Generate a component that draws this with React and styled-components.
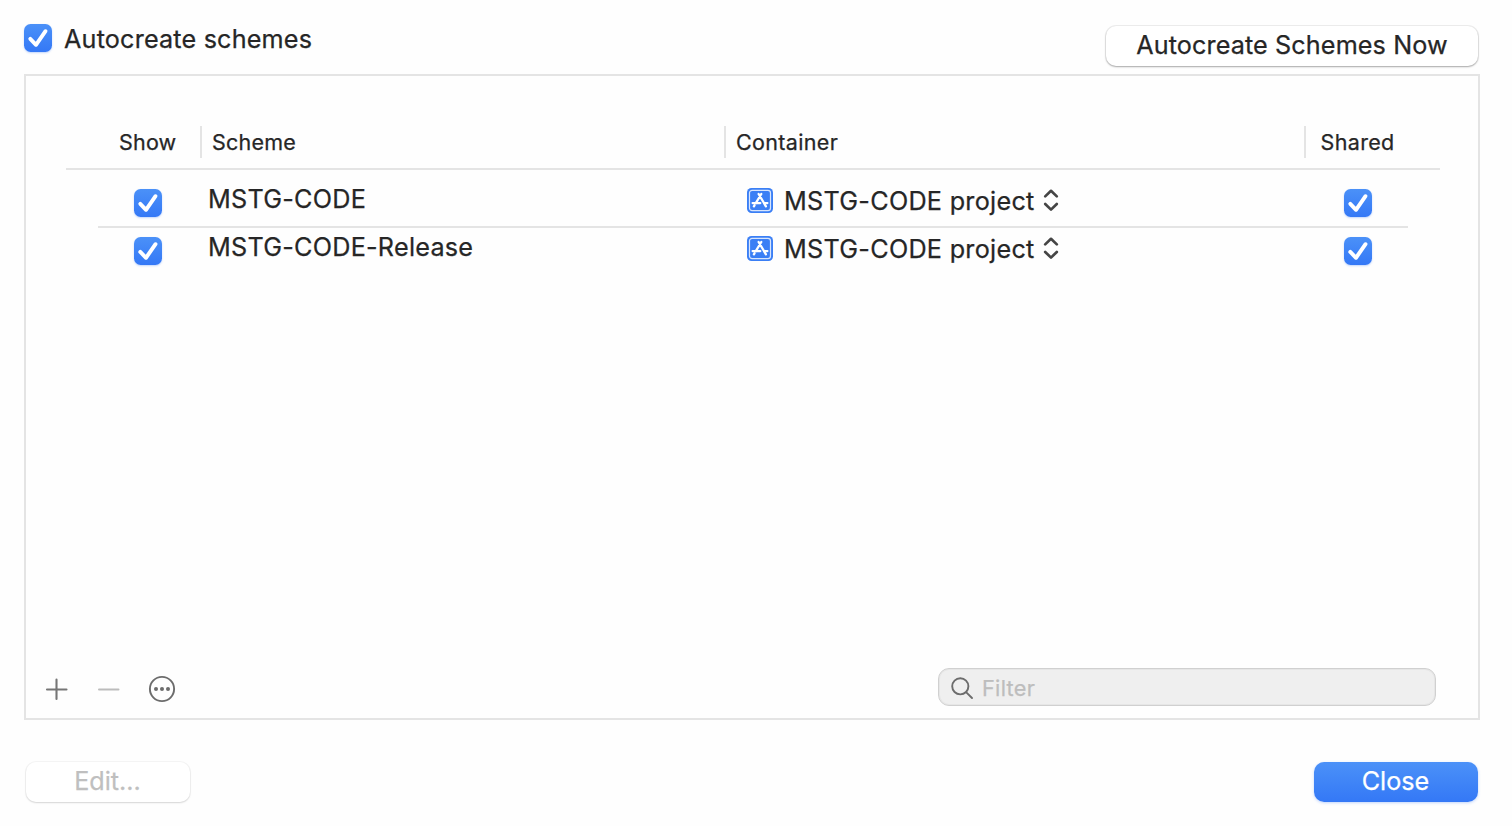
import React from "react";
import styled, { createGlobalStyle } from "styled-components";

const GlobalStyle = createGlobalStyle`
  * { box-sizing: border-box; }
  body {
    margin: 0;
    background: #fefefe;
    color: #262626;
    font-family: Inter, "Liberation Sans", sans-serif;
    font-size: 25.2px;
    line-height: 30px;
    -webkit-font-smoothing: antialiased;
  }
`;

const Sheet = styled.main`
  width: 1512px;
  height: 826px;
  padding: 24px 32px 0 24px;
  display: flex;
  flex-direction: column;
  background: #fefefe;
`;

const TopBar = styled.header`
  height: 50px;
  padding-right: 2px;
  width: 1456px;
  display: flex;
  justify-content: space-between;
  align-items: flex-start;
`;

const CheckLabel = styled.label`
  display: flex;
  gap: 12px;
`;

const Text = styled.span`
  white-space: nowrap;
  letter-spacing: ${(p) => p.$track || 0}px;
  -webkit-text-stroke: 0.25px currentColor;
`;

const CheckBox = styled.span`
  display: block;
  width: 28px;
  height: 28px;
  flex: none;
  border-radius: 6.5px;
  background: linear-gradient(#4b91f8, #3478f6);
  box-shadow: 0 1px 2px rgba(52, 120, 246, 0.3);

  svg { display: block; }
`;

const Button = styled.button`
  width: ${(p) => p.$width}px;
  height: 40px;
  padding: 0 ${(p) => (p.$width < 200 ? 1 : 0)}px 2px 0;
  border: 0;
  border-radius: 10px;
  font: inherit;
  line-height: 38px;
  color: ${(p) => (p.$kind === "primary" ? "#fff" : p.disabled ? "#bfbfbf" : "#262626")};
  background: ${(p) => (p.$kind === "primary" ? "linear-gradient(#4b91f8, #3478f6)" : "#fff")};
  box-shadow: ${(p) =>
    p.$kind === "primary"
      ? "0 1px 3px rgba(52, 120, 246, 0.3)"
      : p.disabled
      ? "0 0 0 1px rgba(0, 0, 0, 0.035), 0 1px 2px rgba(0, 0, 0, 0.13)"
      : "0 0 0 1px rgba(0, 0, 0, 0.06), 0 1px 2px rgba(0, 0, 0, 0.3)"};
`;

const TopButton = styled(Button)`
  margin-top: 2px;
`;

const Frame = styled.section`
  width: 1456px;
  height: 646px;
  border: 2px solid #e4e4e4;
  padding: 50px 38px 0 40px;
  display: flex;
  flex-direction: column;
`;

const HeaderRow = styled.div`
  height: 44px;
  border-bottom: 2px solid #e4e4e4;
  display: grid;
  grid-template-columns: 134px 524px 580px 136px;
  font-size: 21.5px;
`;

const HeaderCell = styled.div`
  height: 32px;
  padding-left: ${(p) => p.$pad}px;
  border-left: ${(p) => (p.$first ? "0" : "2px solid #e4e4e4")};
  line-height: 32px;
`;

const Rows = styled.div`
  padding: 10px 32px 0;
  flex: 1;
`;

const Row = styled.div`
  height: 48px;
  border-bottom: 2px solid ${(p) => (p.$last ? "transparent" : "#e4e4e4")};
  display: grid;
  grid-template-columns: 110px 539px 597px 64px;
  align-items: start;
`;

const CheckCell = styled.div`
  padding: 9px 0 0 ${(p) => p.$pad || 0}px;
`;

const NameCell = styled.div`
  padding-top: 4px;
`;

const ContainerCell = styled.div`
  padding-top: 6px;
  display: flex;
`;

const ProjectGlyph = styled.svg`
  margin: 2px 11px 0 0;
  flex: none;
`;

const Stepper = styled.svg`
  margin: 2px 0 0 8.5px;
  flex: none;
`;

const Footer = styled.div`
  height: 50px;
  margin: 0 4px 0 -40px;
  padding-left: 18px;
  display: flex;
  align-items: flex-start;
  justify-content: space-between;
`;

const Tools = styled.div`
  display: flex;
  padding-top: 6px;
`;

const FilterField = styled.div`
  width: 498px;
  height: 38px;
  border: 1px solid #d0d0d0;
  border-radius: 11px;
  background: #efefef;
  box-shadow: inset 0 0 0 1px #e6e6e6;
  display: flex;
  padding-left: 11px;
  font-size: 21.7px;
  line-height: 38px;
  color: #bdbdbd;

  svg { margin: 7px 8px 0 0; }
`;

const BottomBar = styled.footer`
  width: 1456px;
  padding: 42px 2px 0;
  display: flex;
  justify-content: space-between;
`;

function Check() {
  return (
    <CheckBox role="checkbox" aria-checked="true">
      <svg width="28" height="28" viewBox="0 0 28 28" fill="none">
        <path d="M6.3 14.9L12 20.8L21.5 7.2" stroke="#fff" strokeWidth="3.9" strokeLinecap="round" strokeLinejoin="round" />
      </svg>
    </CheckBox>
  );
}

function ProjectIcon() {
  return (
    <ProjectGlyph width="26" height="25" viewBox="0 0 26 25" fill="none">
      <rect width="26" height="25" rx="4.5" fill="#3b7ff5" />
      <rect x="2.5" y="2.3" width="21" height="20.4" rx="2.6" stroke="#d7e5fd" strokeWidth="1.2" />
      <g stroke="#fff" strokeWidth="2.3" strokeLinecap="round">
        <path d="M14.3 6L8.8 15.1M7.5 17.3L6.9 18.3M11.6 6L18.9 18.3" />
        <path d="M5.6 15.1H13.3M17.4 15.1H20.4" />
      </g>
    </ProjectGlyph>
  );
}

function Chevrons() {
  return (
    <Stepper width="16" height="24" viewBox="0 0 16 24" fill="none">
      <path d="M2.2 8.4L8 2.8L13.8 8.4M2.2 16L8 21.6L13.8 16" stroke="#454545" strokeWidth="2.7" strokeLinecap="round" strokeLinejoin="round" />
    </Stepper>
  );
}

const schemes = [
  { name: "MSTG-CODE", container: "MSTG-CODE project" },
  { name: "MSTG-CODE-Release", container: "MSTG-CODE project" },
];

export default function App() {
  return (
    <>
      <GlobalStyle />
      <Sheet>
        <TopBar>
          <CheckLabel>
            <Check />
            <Text $track={0.18}>Autocreate schemes</Text>
          </CheckLabel>
          <TopButton $width={372}>
            <Text $track={0.11}>Autocreate Schemes Now</Text>
          </TopButton>
        </TopBar>
        <Frame>
          <HeaderRow>
            <HeaderCell $first $pad={53}><Text $track={0.2}>Show</Text></HeaderCell>
            <HeaderCell $pad={10}><Text $track={0.22}>Scheme</Text></HeaderCell>
            <HeaderCell $pad={10}><Text $track={0.35}>Container</Text></HeaderCell>
            <HeaderCell $pad={14.5}><Text $track={0.35}>Shared</Text></HeaderCell>
          </HeaderRow>
          <Rows>
            {schemes.map((s, i) => (
              <Row key={s.name} $last={i === schemes.length - 1}>
                <CheckCell $pad={36}><Check /></CheckCell>
                <NameCell><Text $track={0.25}>{s.name}</Text></NameCell>
                <ContainerCell>
                  <ProjectIcon />
                  <Text $track={0.28}>{s.container}</Text>
                  <Chevrons />
                </ContainerCell>
                <CheckCell><Check /></CheckCell>
              </Row>
            ))}
          </Rows>
          <Footer>
            <Tools>
              <svg width="134" height="30" viewBox="0 0 134 30" fill="none" strokeLinecap="round">
                <path d="M3 15.5H22.5M12.5 5.5V25" stroke="#767676" strokeWidth="2.1" />
                <path d="M55 15.6H74.5" stroke="#bcbcbc" strokeWidth="2" />
                <circle cx="118" cy="15" r="12.1" stroke="#6c6c6c" strokeWidth="1.9" />
                <g fill="#6c6c6c">
                  <circle cx="112" cy="15" r="2" />
                  <circle cx="118" cy="15" r="2" />
                  <circle cx="124" cy="15" r="2" />
                </g>
              </svg>
            </Tools>
            <FilterField>
              <svg width="24" height="24" viewBox="0 0 24 24" fill="none" stroke="#6c6c6c" strokeWidth="1.9" strokeLinecap="round">
                <circle cx="10.3" cy="10.3" r="8.1" />
                <path d="M16.3 16.3L22 22" />
              </svg>
              <Text $track={0.3}>Filter</Text>
            </FilterField>
          </Footer>
        </Frame>
        <BottomBar>
          <Button $width={164} disabled><Text>Edit...</Text></Button>
          <Button $width={164} $kind="primary"><Text>Close</Text></Button>
        </BottomBar>
      </Sheet>
    </>
  );
}
